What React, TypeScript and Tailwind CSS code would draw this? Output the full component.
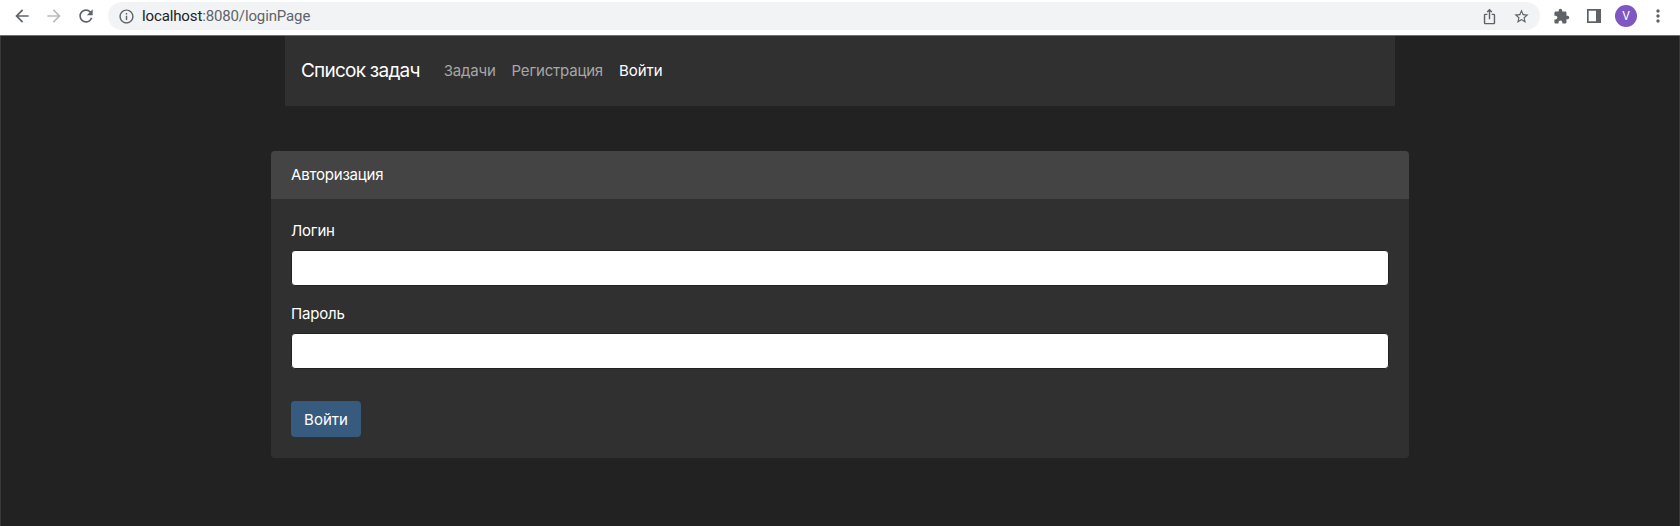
import React from "react";
import {
  MdArrowBack,
  MdArrowForward,
  MdRefresh,
  MdInfoOutline,
  MdIosShare,
  MdStarBorder,
  MdExtension,
  MdMoreVert,
} from "react-icons/md";

function BrowserBar() {
  return (
    <header className="flex h-9 items-start border-b border-[#6c6e70] bg-white pt-[2px] font-['Roboto',sans-serif] text-[#5f6368]">
      <div className="flex h-7 w-[108px] shrink-0 items-center gap-3 pl-3">
        <MdArrowBack size={20} />
        <MdArrowForward size={20} className="text-[#babcbe]" />
        <MdRefresh size={20} />
      </div>
      <div className="flex h-7 w-[1432px] shrink-0 items-center rounded-full bg-[#f1f3f4] px-[10px]">
        <MdInfoOutline size={17} />
        <span className="ml-[7px] pt-px text-[15px] leading-[27px] tracking-[-0.13px]">
          <span className="text-[#202124]">localhost</span>:8080/loginPage
        </span>
        <div className="ml-auto flex items-center gap-[15px]">
          <MdIosShare size={17} />
          <MdStarBorder size={17} />
        </div>
      </div>
      <div className="flex h-7 flex-1 items-center pl-[13px]">
        <MdExtension size={17} />
        <svg className="ml-[17px]" width="14" height="14" viewBox="0 0 14 14">
          <path fill="currentColor" fillRule="evenodd" d="M0 0h14v14H0zM1.7 1.7v10.6H9V1.7z" />
        </svg>
        <span className="ml-[14px] flex size-[22px] items-center justify-center rounded-full bg-[#7e57c2] text-[12px] text-white">
          V
        </span>
        <MdMoreVert size={20} className="ml-[11px]" />
      </div>
    </header>
  );
}

function Navbar() {
  return (
    <nav className="mx-auto flex h-[70px] w-[1110px] items-center bg-[#303030] pl-4 pt-px text-[15px] tracking-[-0.2px] text-[#a7a7a7]">
      <a className="mr-6 text-[19px] tracking-[-0.76px] text-white">Список задач</a>
      <a className="mr-4">Задачи</a>
      <a className="mr-4">Регистрация</a>
      <a className="tracking-[0px] text-white">Войти</a>
    </nav>
  );
}

function Field({ label, type }: { label: string; type: string }) {
  return (
    <label className="flex flex-col gap-2">
      <span className="h-[23px] leading-[23px]">{label}</span>
      <input type={type} className="h-9 w-full rounded-[4px] border border-[#222] bg-white px-3 text-[#444] outline-none" />
    </label>
  );
}

function LoginCard() {
  return (
    <section className="mx-auto mt-[45px] h-[307px] w-[1138px] overflow-hidden rounded-[4px] bg-[#303030]">
      <h1 className="flex h-12 items-center bg-[#444] pl-5 pt-px">Авторизация</h1>
      <form className="flex flex-col items-start px-5 pt-5">
        <div className="flex w-full flex-col gap-4">
          <Field label="Логин" type="text" />
          <Field label="Пароль" type="password" />
        </div>
        <button type="button" className="mt-8 h-9 w-[70px] rounded-[4px] bg-[#375a7f] pt-[2px] tracking-[0px]">
          Войти
        </button>
      </form>
    </section>
  );
}

export default function App() {
  return (
    <div className="h-[526px] w-[1680px] overflow-hidden bg-[#222]">
      <BrowserBar />
      <main className="h-[490px] border-x border-[#3a3a3a] font-['Inter',sans-serif] text-[15px] tracking-[-0.2px] text-white">
        <Navbar />
        <LoginCard />
      </main>
    </div>
  );
}
